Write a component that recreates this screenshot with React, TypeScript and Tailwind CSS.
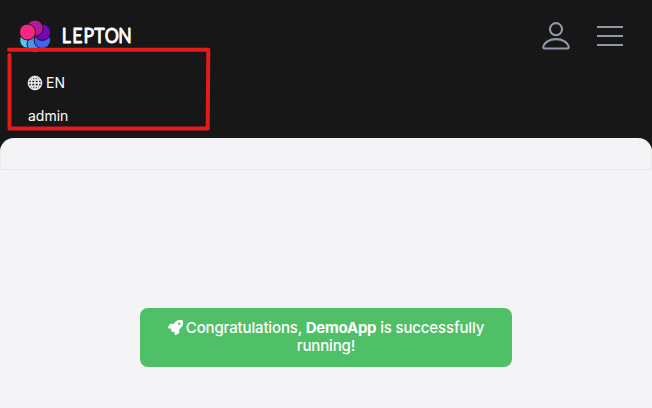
import { BsGlobe } from "react-icons/bs";
import { FaRocket } from "react-icons/fa";

function Logo() {
  return (
    <svg width="120" height="36" viewBox="0 0 120 36" aria-label="LEPTON">
      <g stroke="#171717" strokeWidth="1">
        <circle cx="7.7" cy="20.3" r="8" fill="#4cc9f0" />
        <circle cx="15" cy="24.3" r="8" fill="#4895ef" />
        <circle cx="22.3" cy="20.3" r="8.2" fill="#4361ee" />
        <circle cx="22.3" cy="12.2" r="8.2" fill="#7209b7" />
        <circle cx="15" cy="8.2" r="8.2" fill="#b5179e" />
        <circle cx="7.5" cy="12" r="8" fill="#fb2585" />
      </g>
      <text
        x="48.5 60.9 73.9 86.2 98.6 114.3"
        y="23.4"
        transform="scale(.86 1)"
        className="fill-white stroke-white font-['Lato',sans-serif] text-[20.5px] font-normal"
        strokeWidth="0.9"
        strokeLinejoin="round"
      >
        LEPTON
      </text>
    </svg>
  );
}

function Header() {
  return (
    <header className="flex h-[68px] justify-between pl-5 pr-[29px] pt-5">
      <Logo />
      <div className="flex gap-[27px] text-[#9198a8]">
        <svg width="28" height="32" viewBox="0 0 28 32" fill="none" stroke="currentColor" strokeWidth="2.1">
          <ellipse cx="14" cy="9.2" rx="6" ry="6.1" />
          <path d="M2.5 28.5h23c.8 0 1.3-.5 1.2-1.3C26 22.4 20.5 19.1 14 19.1S2 22.4 1.3 27.2c-.1.8.4 1.3 1.2 1.3Z" />
        </svg>
        <div className="flex w-[26px] flex-col gap-[7px] pt-1.5">
          <i className="h-0.5 bg-current" />
          <i className="h-0.5 bg-current" />
          <i className="h-0.5 bg-current" />
        </div>
      </div>
    </header>
  );
}

function Highlight() {
  return (
    <svg
      className="pointer-events-none absolute left-0 top-[40px]"
      width="220"
      height="96"
      viewBox="0 0 220 96"
      fill="none"
      stroke="#e51b1b"
      strokeWidth="4"
      strokeLinecap="round"
      strokeLinejoin="round"
    >
      <path d="M9 9.8H208.3V16M208.3 11L207.7 88.5H9.5V15" />
    </svg>
  );
}

export default function App() {
  return (
    <main className="relative flex h-[408px] w-full flex-col overflow-hidden bg-[#171717] font-['Inter',sans-serif]">
      <Header />
      <nav className="flex h-[70px] shrink-0 flex-col gap-[13px] pl-7 pt-[5px] text-sm leading-5 text-white">
        <span className="flex items-center gap-1">
          <BsGlobe size={14} className="overflow-visible stroke-[0.6px]" />
          EN
        </span>
        <span>admin</span>
      </nav>
      <section className="flex flex-1 flex-col overflow-hidden rounded-t-[14px] bg-[#f4f4f6]">
        <div className="h-8 shrink-0 rounded-t-[14px] border border-t-0 border-[#eaeaec]" />
        <div className="mx-auto mt-[138px] h-[59px] w-[372px] rounded-lg bg-[#50c068] px-5 pt-[11px] text-center text-[15px] font-medium leading-[18px] tracking-[-0.15px] text-white">
          <FaRocket className="mr-[3px] inline-block align-[-2px]" size={15} />
          Congratulations, <strong className="font-bold tracking-[-0.25px]">DemoApp</strong> is successfully running!
        </div>
      </section>
      <Highlight />
    </main>
  );
}
